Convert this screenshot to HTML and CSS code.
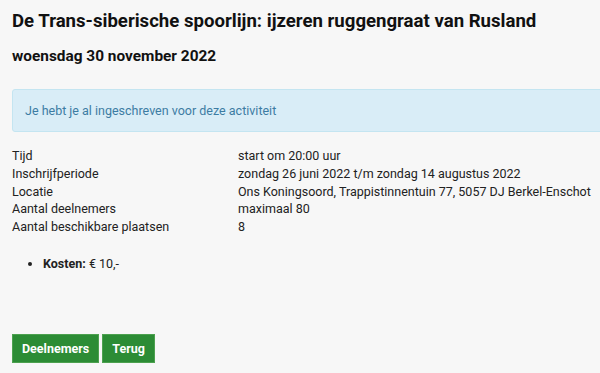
FILE: index.html
```html
<!DOCTYPE html>
<html lang="nl">
<head>
    <meta charset="UTF-8">
    <meta name="viewport" content="width=device-width, initial-scale=1.0">
    <title>Activiteit</title>
    <link rel="stylesheet" href="styles.css">
</head>
<body>
    <div class="page">
        <h1>De Trans-siberische spoorlijn: ijzeren ruggengraat van Rusland</h1>
        <h3>woensdag 30 november 2022</h3>

        <div class="alert">Je hebt je al ingeschreven voor deze activiteit</div>

        <div class="details">
            <div>Tijd</div><div>start om 20:00 uur</div>
            <div>Inschrijfperiode</div><div>zondag 26 juni 2022 t/m zondag 14 augustus 2022</div>
            <div>Locatie</div><div>Ons Koningsoord, Trappistinnentuin 77, 5057 DJ Berkel-Enschot</div>
            <div>Aantal deelnemers</div><div>maximaal 80</div>
            <div>Aantal beschikbare plaatsen</div><div>8</div>
        </div>

        <ul class="extra">
            <li><strong>Kosten:</strong> € 10,-</li>
        </ul>

        <div class="buttons">
            <button type="button">Deelnemers</button>
            <button type="button">Terug</button>
        </div>
    </div>
</body>
</html>
```

FILE: styles.css
```css
body {
    margin: 0;
    background: #f7f7f7;
    font-family: Roboto, "Liberation Sans", sans-serif;
    font-size: 12.5px;
    color: #222;
}
.page {
    padding: 9px 12px 8px;
}
h1 {
    font-size: 18.6px;
    font-weight: 700;
    margin: 0;
    line-height: 24px;
    color: #111;
}
h3 {
    font-size: 15.4px;
    font-weight: 700;
    margin: 13px 0 0;
    line-height: 20px;
    color: #111;
}
.alert {
    margin: 23px -20px 0 0;
    padding: 12px;
    background: #d9edf7;
    border: 1px solid #c4e5f1;
    border-radius: 3px;
    color: #3d7ca3;
    line-height: 17px;
}
.details {
    display: grid;
    grid-template-columns: 226px auto;
    margin-top: 15px;
    line-height: 17.75px;
    white-space: nowrap;
}
.extra {
    margin: 19px 0 0;
    padding-left: 31px;
    line-height: 17.75px;
}
.buttons {
    margin-top: 61px;
    display: flex;
    gap: 3px;
}
.buttons button {
    font-family: inherit;
    font-size: 12.5px;
    font-weight: 700;
    color: #fff;
    background: #2c8c35;
    border: 1px solid #4ca14f;
    padding: 0 9px;
    height: 29px;
    cursor: pointer;
}
```
